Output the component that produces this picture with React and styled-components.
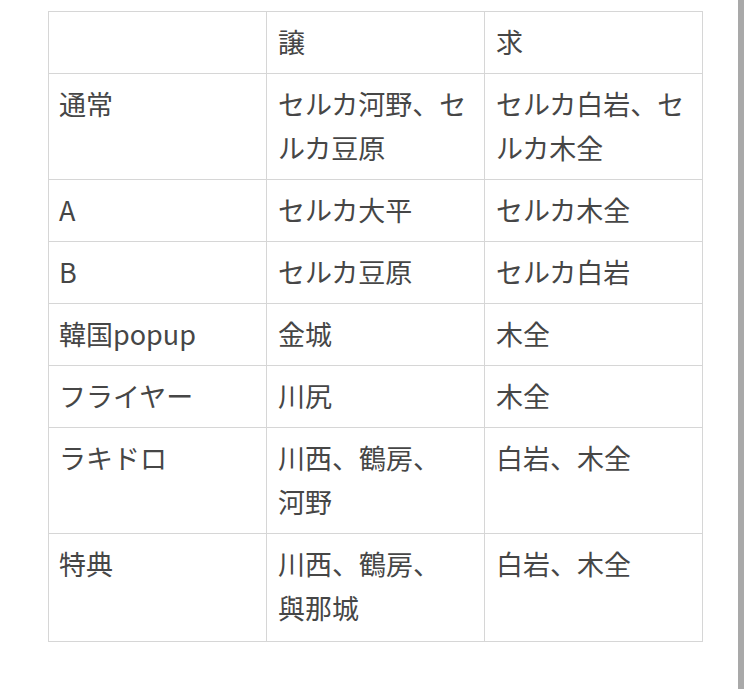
import React from "react";
import styled, { createGlobalStyle } from "styled-components";

const GlobalStyle = createGlobalStyle`
    html, body {
        margin: 0;
        padding: 0;
        background: #fff;
    }
    body {
        font-family: "Noto Sans CJK JP", "Noto Sans", sans-serif;
        overflow: hidden;
    }
`

const Page = styled.div`
    position: relative;
    width: 750px;
    height: 689px;
    padding: 11px 0 0 48px;
    box-sizing: border-box;
`

const Table = styled.table`
    width: 654px;
    table-layout: fixed;
    border-collapse: collapse;
    color: #464646;
    font-size: 27px;
    line-height: 44px;

    tr:last-child td {
        padding-bottom: 11px;
    }
`

const Cell = styled.td`
    border: 1px solid #d6d6d6;
    padding: 8px 10px 9px 11px;
    vertical-align: top;
    font-weight: 400;
    word-break: break-all;
`

const LabelCell = styled(Cell)`
    padding-left: 10px;
`

const ScrollThumb = styled.div`
    position: absolute;
    top: 0;
    right: 6px;
    width: 6px;
    height: 689px;
    background: #a9a9a9;
`

const rows = [
    ["通常", "セルカ河野、セルカ豆原", "セルカ白岩、セルカ木全"],
    ["A", "セルカ大平", "セルカ木全"],
    ["B", "セルカ豆原", "セルカ白岩"],
    ["韓国popup", "金城", "木全"],
    ["フライヤー", "川尻", "木全"],
    ["ラキドロ", ["川西、鶴房、", "河野"], "白岩、木全"],
    ["特典", ["川西、鶴房、", "與那城"], "白岩、木全"],
];

const renderText = value => Array.isArray(value)
    ? value.map((part, i) => (
        <React.Fragment key={i}>
            {i > 0 && <br />}
            {part}
        </React.Fragment>
    ))
    : value;

const App = () => {
    return (
        <Page>
            <GlobalStyle />
            <Table>
                <colgroup>
                    <col style={{ width: "218px" }} />
                    <col style={{ width: "218px" }} />
                    <col style={{ width: "218px" }} />
                </colgroup>
                <tbody>
                    <tr>
                        <LabelCell />
                        <Cell>譲</Cell>
                        <Cell>求</Cell>
                    </tr>
                    {rows.map(([label, give, want]) => (
                        <tr key={label}>
                            <LabelCell>{label}</LabelCell>
                            <Cell>{renderText(give)}</Cell>
                            <Cell>{renderText(want)}</Cell>
                        </tr>
                    ))}
                </tbody>
            </Table>
            <ScrollThumb />
        </Page>
    )
}

export default App;
